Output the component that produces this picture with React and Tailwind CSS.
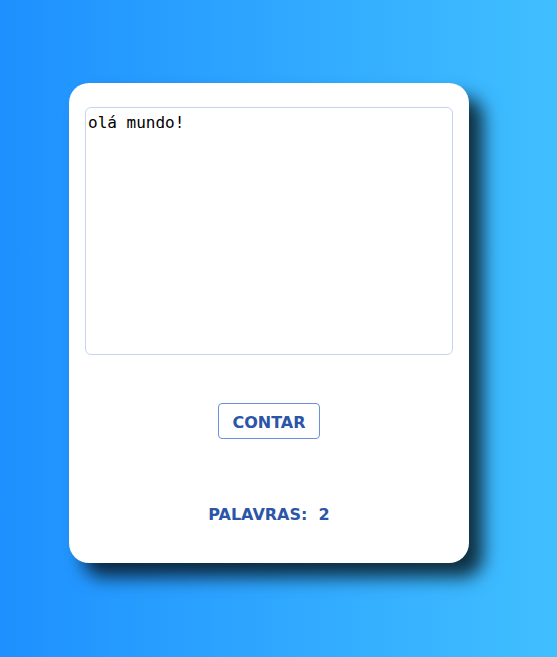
import React, { useState } from "react";

export default function App() {
  const [text, setText] = useState("olá mundo!");
  const [count, setCount] = useState(2);
  return (
    <div className="min-h-screen w-full bg-[linear-gradient(to_right,#1e90ff,#40bfff)] flex items-start justify-start">
      <div className="ml-[69px] mt-[83px] w-[400px] h-[480px] bg-white rounded-[20px] shadow-[14px_14px_18px_rgba(0,0,0,0.75)] flex flex-col items-center px-4 pt-6">
        <textarea
          value={text}
          onChange={(e) => setText(e.target.value)}
          className="w-full h-[248px] resize-none border border-[#c6d4f2] rounded-[6px] px-[2px] pt-[5px] pb-[4px] text-[16px] leading-[19px] text-black outline-none font-['DejaVu_Sans_Mono',monospace]"
        />
        <button
          onClick={() => setCount(text.trim() ? text.trim().split(/\s+/).length : 0)}
          className="mt-12 w-[102px] h-9 pt-[3px] border border-[#6c8fdc] rounded-[4px] bg-white text-[#2b55a6] font-bold text-[16px] font-['DejaVu_Sans',sans-serif]"
        >
          CONTAR
        </button>
        <div className="mt-[64px] text-[#2b55a6] font-bold text-[16px] leading-6 font-['DejaVu_Sans',sans-serif] whitespace-pre">
          {"PALAVRAS:  " + count}
        </div>
      </div>
    </div>
  );
}
